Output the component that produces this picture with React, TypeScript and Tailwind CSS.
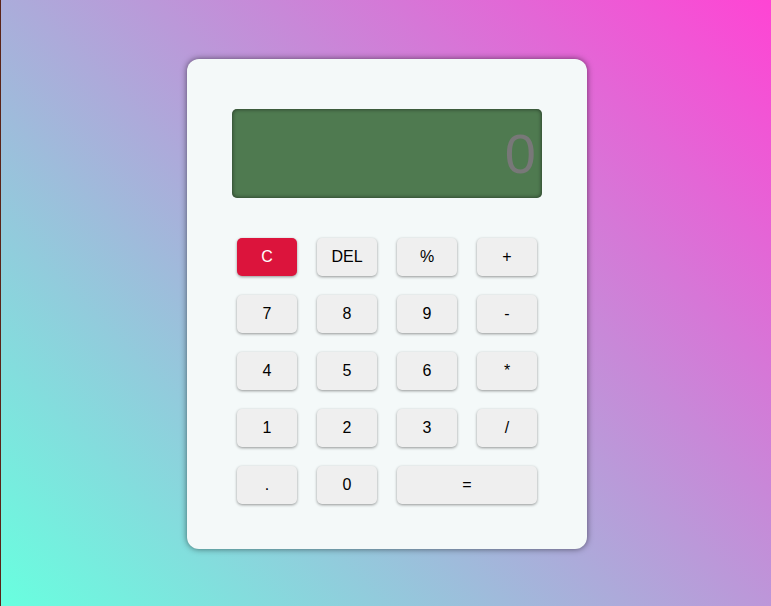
import React from 'react';

const keys: { label: string; wide?: boolean; danger?: boolean }[] = [
  { label: 'C', danger: true },
  { label: 'DEL' },
  { label: '%' },
  { label: '+' },
  { label: '7' },
  { label: '8' },
  { label: '9' },
  { label: '-' },
  { label: '4' },
  { label: '5' },
  { label: '6' },
  { label: '*' },
  { label: '1' },
  { label: '2' },
  { label: '3' },
  { label: '/' },
  { label: '.' },
  { label: '0' },
  { label: '=', wide: true },
];

const App: React.FC = () => {
  return (
    <div
      className="h-[606px] w-full flex items-center justify-center border-l border-[#5a2418] bg-[linear-gradient(45deg,#68ffdf,#ff44d4)]"
      style={{ fontFamily: '"Liberation Sans", Arial, sans-serif' }}
    >
      <div className="w-[400px] h-[490px] ml-[2px] mt-[2px] rounded-[12px] bg-[#f4f9f9] shadow-[0_0_6px_rgba(0,0,0,0.55)] px-[45px] pt-[50px]">
        <div className="h-[89px] w-[310px] rounded-[5px] bg-[#4f7a50] shadow-[inset_0_0_4px_rgba(0,0,0,0.6)] flex items-center justify-end pr-[6px]">
          <span className="text-[56px] leading-none text-[#787878]">0</span>
        </div>
        <div className="mt-[40px] ml-[5px] grid grid-cols-[repeat(4,60px)] gap-x-[20px] gap-y-[19px]">
          {keys.map((k) => (
            <button
              key={k.label}
              className={
                'h-[38px] rounded-[5px] text-[16px] shadow-[0_1px_3px_rgba(0,0,0,0.4)] ' +
                (k.wide ? 'col-span-2 ' : '') +
                (k.danger ? 'bg-[#dc143c] text-white' : 'bg-[#efefef] text-black')
              }
            >
              {k.label}
            </button>
          ))}
        </div>
      </div>
    </div>
  );
};

export default App;
